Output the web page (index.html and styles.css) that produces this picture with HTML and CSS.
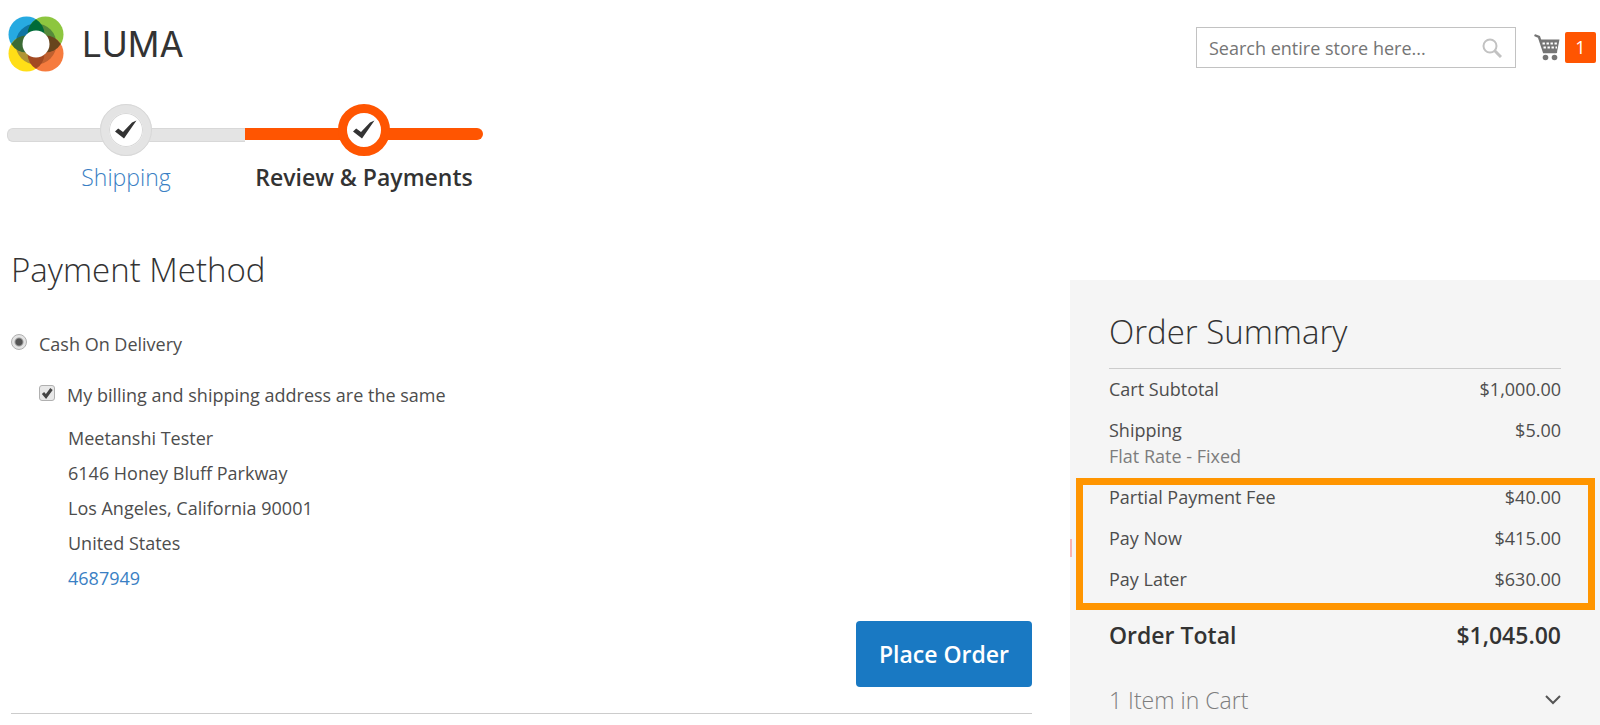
FILE: index.html
```html
<!DOCTYPE html>
<html lang="en">
<head>
  <meta charset="UTF-8">
  <meta name="viewport" content="width=device-width, initial-scale=1.0">
  <title>Checkout</title>
  <link rel="stylesheet" href="styles.css">
</head>
<body>
  <header class="page-header">
    <a class="logo" href="#" aria-label="Luma">
      <svg class="logo-mark" viewBox="0 0 56 56" aria-hidden="true">
        <defs>
          <clipPath id="ring"><circle cx="28" cy="28" r="20.5"/></clipPath>
        </defs>
        <circle cx="18.5" cy="18.5" r="18" fill="#27aae1"/>
        <circle cx="37.5" cy="18.5" r="18" fill="#8dc63f"/>
        <circle cx="18.5" cy="37.5" r="18" fill="#ffde17"/>
        <circle cx="37.5" cy="37.5" r="18" fill="#f67b3e"/>
        <g clip-path="url(#ring)">
          <rect width="28" height="28" fill="#1075a3"/>
          <rect x="28" width="28" height="28" fill="#568a3a"/>
          <rect y="28" width="28" height="28" fill="#b09536"/>
          <rect x="28" y="28" width="28" height="28" fill="#c0602f"/>
        </g>
        <path d="M28 3.2A18 18 0 0 1 28 33.8A18 18 0 0 1 28 3.2Z" fill="#006b38"/>
        <path d="M28 22.2A18 18 0 0 1 28 52.8A18 18 0 0 1 28 22.2Z" fill="#a34a22"/>
        <path d="M3.2 28A18 18 0 0 1 33.8 28A18 18 0 0 1 3.2 28Z" fill="#3b6b35"/>
        <path d="M22.2 28A18 18 0 0 1 52.8 28A18 18 0 0 1 22.2 28Z" fill="#68451d"/>
        <circle cx="28" cy="28" r="13.5" fill="#fff"/>
      </svg>
      <span class="logo-text">LUMA</span>
    </a>
    <div class="header-tools">
      <form class="search">
        <input type="text" class="search-input" placeholder="Search entire store here..." aria-label="Search">
        <button type="button" class="search-btn" aria-label="Search">
          <svg viewBox="0 0 20 20" width="20" height="20" fill="none" stroke="#c2c2c2" stroke-width="2">
            <circle cx="8" cy="8" r="6.5"/>
            <path d="M12.5 12.5L19 19" stroke-width="3"/>
          </svg>
        </button>
      </form>
      <a class="minicart" href="#" aria-label="My Cart">
        <svg viewBox="0 0 26 27" width="26" height="27" aria-hidden="true">
          <path d="M1.5 1.5L5 3L10 18H22" fill="none" stroke="#757575" stroke-width="2.4" stroke-linecap="round"/>
          <path d="M5.5 5.5H25.5L23 18H10Z" fill="#757575"/>
          <path d="M8.5 9.5H24M9.5 13.5H23" stroke="#fff" stroke-width="2" stroke-dasharray="2.4 1.6"/>
          <circle cx="11.5" cy="23.5" r="2.8" fill="#757575"/>
          <circle cx="20.5" cy="23.5" r="2.8" fill="#757575"/>
        </svg>
        <span class="counter">1</span>
      </a>
    </div>
  </header>

  <ol class="progress">
    <li class="step complete">
      <span class="step-dot">
        <svg viewBox="0 0 22 20" width="22" height="20"><path d="M0 11.5L3.2 8.5L8 12L17 2.5L21.5 0.5L9 18.5Z" fill="#333"/></svg>
      </span>
      <a class="step-label" href="#">Shipping</a>
    </li>
    <li class="step active">
      <span class="step-dot">
        <svg viewBox="0 0 22 20" width="22" height="20"><path d="M0 11.5L3.2 8.5L8 12L17 2.5L21.5 0.5L9 18.5Z" fill="#333"/></svg>
      </span>
      <span class="step-label">Review &amp; Payments</span>
    </li>
  </ol>

  <div class="checkout">
    <main class="payment">
      <h1 class="title">Payment Method</h1>
      <form class="method">
        <div class="field">
          <input type="radio" id="cashondelivery" name="payment" checked>
          <label for="cashondelivery">Cash On Delivery</label>
        </div>
        <div class="billing">
          <div class="field">
            <input type="checkbox" id="same-address" checked>
            <label for="same-address">My billing and shipping address are the same</label>
          </div>
          <address class="address">
            Meetanshi Tester<br>
            6146 Honey Bluff Parkway<br>
            Los Angeles, California 90001<br>
            United States<br>
            <a href="tel:4687949">4687949</a>
          </address>
        </div>
        <div class="actions">
          <button type="button" class="place-order">Place Order</button>
        </div>
      </form>
    </main>

    <aside class="summary">
      <h2 class="title">Order Summary</h2>
      <table class="totals">
        <tbody>
          <tr><th scope="row">Cart Subtotal</th><td>$1,000.00</td></tr>
          <tr><th scope="row">Shipping<span class="rate">Flat Rate - Fixed</span></th><td>$5.00</td></tr>
        </tbody>
        <tbody class="partial">
          <tr><th scope="row">Partial Payment Fee</th><td>$40.00</td></tr>
          <tr><th scope="row">Pay Now</th><td>$415.00</td></tr>
          <tr><th scope="row">Pay Later</th><td>$630.00</td></tr>
        </tbody>
        <tbody>
          <tr class="grand"><th scope="row">Order Total</th><td>$1,045.00</td></tr>
        </tbody>
      </table>
      <button type="button" class="items-toggle">
        <span>1 Item in Cart</span>
        <svg viewBox="0 0 16 10" width="16" height="10" fill="none" stroke="#555" stroke-width="2"><path d="M1 1L8 8L15 1"/></svg>
      </button>
    </aside>
  </div>
</body>
</html>
```

FILE: styles.css
```css
:root {
  --orange: #ff5501;
  --blue: #1979c3;
  --link: #3a7fc4;
  --text: #4d4d4d;
  --dark: #333;
  --grey: #e4e4e4;
  --highlight: #ff9500;
}

* {
  box-sizing: border-box;
}

body {
  margin: 0;
  font-family: "Open Sans", sans-serif;
  font-size: 18px;
  line-height: 26px;
  color: var(--text);
  background: #fff;
}

a {
  color: var(--link);
  text-decoration: none;
}

/* header */
.page-header {
  display: flex;
  justify-content: space-between;
  align-items: flex-start;
  padding: 16px 4px 0 8px;
}

.logo {
  display: flex;
  align-items: center;
  gap: 18px;
  color: var(--dark);
}

.logo-mark {
  width: 56px;
  height: 56px;
}

.logo-text {
  font-family: Inter, sans-serif;
  font-size: 35px;
  font-weight: 400;
}

.header-tools {
  display: flex;
  align-items: center;
  gap: 18px;
  padding-top: 11px;
}

.search {
  display: flex;
  align-items: center;
  width: 320px;
  height: 41px;
  border: 1px solid #c2c2c2;
}

.search-input {
  flex: 1;
  min-width: 0;
  padding: 0 0 0 12px;
  border: 0;
  font: inherit;
  background: none;
}

.search-input::placeholder {
  color: #757575;
  opacity: 1;
}

.search-btn {
  display: flex;
  padding: 0 13px;
  border: 0;
  background: none;
}

.minicart {
  display: flex;
  align-items: center;
  gap: 5px;
}

.counter {
  width: 31px;
  line-height: 31px;
  border-radius: 2px;
  background: var(--orange);
  color: #fff;
  text-align: center;
}

/* progress bar */
.progress {
  display: flex;
  width: 476px;
  margin: 32px 0 0 7px;
  padding: 0;
  list-style: none;
}

.step {
  flex: 1;
  position: relative;
  display: flex;
  flex-direction: column;
  align-items: center;
  gap: 5px;
}

.step::before {
  content: "";
  position: absolute;
  z-index: -1;
  top: 24px;
  left: 0;
  right: 0;
  height: 12px;
  background: var(--orange);
  border-radius: 0 6px 6px 0;
}

.complete::before {
  background: var(--grey);
  border: 1px solid #d8d8d8;
  border-right: 0;
  border-radius: 6px 0 0 6px;
}

.step-dot {
  display: flex;
  align-items: center;
  justify-content: center;
  width: 52px;
  height: 52px;
  border: 9px solid var(--orange);
  border-radius: 50%;
  background: #fff;
}

.complete .step-dot {
  border-color: var(--grey);
  box-shadow: inset 0 0 0 1px #d8d8d8;
  outline: 1px solid #d8d8d8;
  outline-offset: -1px;
}

.step-label {
  font-size: 23px;
  line-height: 32px;
  font-weight: 300;
}

.active .step-label {
  font-weight: 600;
  color: var(--dark);
}

/* columns */
.checkout {
  display: grid;
  grid-template-columns: minmax(0, 1fr) 530px;
  align-items: start;
  gap: 38px;
  padding-left: 11px;
}

.title {
  margin: 0;
  font-size: 33px;
  line-height: 44px;
  font-weight: 300;
  color: var(--dark);
}

.payment {
  padding-top: 55px;
}

.method {
  padding: 39px 0 26px;
  border-bottom: 1px solid #ccc;
}

.field {
  display: flex;
  align-items: center;
  gap: 12px;
}

.field input {
  appearance: none;
  flex: none;
  width: 16px;
  height: 16px;
  margin: 0 0 4px;
  border: 1px solid #b0b0b0;
  background: #e8e8e8;
}

.field input[type="radio"] {
  border-radius: 50%;
  background: radial-gradient(circle, #555 3px, #e4e4e4 5px);
}

.field input[type="checkbox"] {
  border-radius: 3px;
  background: #e8e8e8 url("data:image/svg+xml,%3Csvg xmlns='http://www.w3.org/2000/svg' viewBox='0 0 14 14'%3E%3Cpath d='M3 7l3 3.5L11.5 3' fill='none' stroke='%23444' stroke-width='3'/%3E%3C/svg%3E") center / 14px no-repeat;
}

.billing {
  padding: 25px 0 0 28px;
}

.address {
  padding: 13px 0 0 29px;
  font-style: normal;
  line-height: 35px;
}

.actions {
  display: flex;
  justify-content: flex-end;
  padding-top: 25px;
}

.place-order {
  padding: 17px 23px;
  border: 0;
  border-radius: 4px;
  background: var(--blue);
  color: #fff;
  font: 600 23px/32px "Open Sans", sans-serif;
}

/* order summary */
.summary {
  position: relative;
  margin-top: 87px;
  padding: 30px 39px 9px;
  background: #f5f5f5;
}

/* small red tick on the left edge */
.summary::before {
  content: "";
  position: absolute;
  top: 259px;
  left: 0;
  width: 2px;
  height: 18px;
  background: #f9b4b4;
}

.totals {
  width: 100%;
  margin-top: 14px;
  border-top: 1px solid #ccc;
  border-collapse: separate;
  border-spacing: 0;
}

.totals th,
.totals td {
  padding: 7px 0 8px;
  font-weight: 400;
  text-align: left;
  vertical-align: top;
}

.totals td {
  text-align: right;
}

.rate {
  display: block;
  color: #7d7d7d;
}

.partial {
  position: relative;
}

.partial::after {
  content: "";
  position: absolute;
  inset: 1px -34px -10px -33px;
  border: 7px solid var(--highlight);
}

.totals .grand th,
.totals .grand td {
  padding: 19px 0 14px;
  font-size: 23px;
  line-height: 32px;
  font-weight: 600;
  color: var(--dark);
}

.items-toggle {
  display: flex;
  justify-content: space-between;
  align-items: center;
  width: 100%;
  margin-top: 19px;
  padding: 0;
  border: 0;
  background: none;
  color: #7d7d7d;
  font: 300 23px/32px "Open Sans", sans-serif;
}
```
